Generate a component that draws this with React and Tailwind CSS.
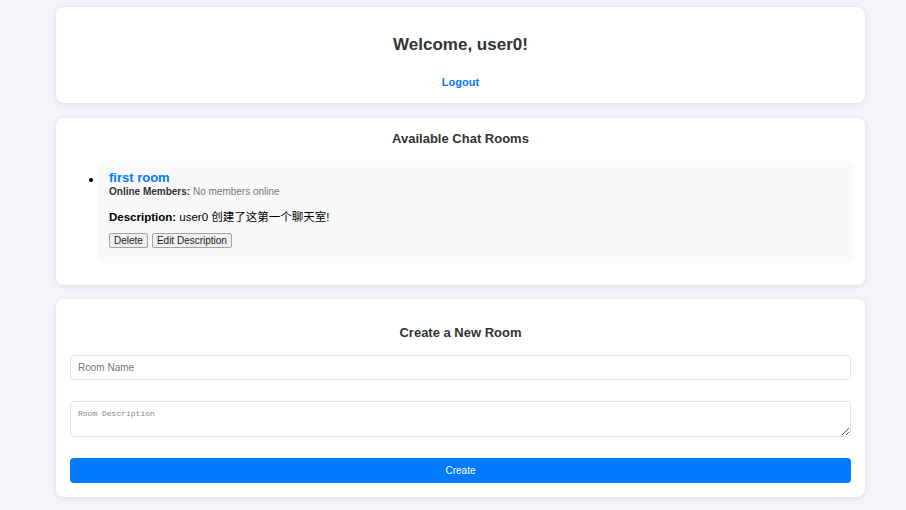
import React from "react";

const card = "bg-white rounded-lg shadow-[0_1px_6px_rgba(0,0,0,0.10)] w-[809px] ml-[56px]";
const btn = "h-[15px] px-[4px] text-[10px] leading-[13px] bg-[#efefef] border border-[#a3a3a3] rounded-[2px] text-[#222]";

export default function App() {
  return (
    <div
      className="min-h-[510px] bg-[#f4f5fa] pt-[7px] pb-[13px] text-[#333]"
      style={{ fontFamily: '"Liberation Sans", Arial, "Noto Sans CJK SC", sans-serif' }}
    >
      {/* BIENVENIDA */}
      <div className={`${card} pt-[28px] pb-[14px] flex flex-col items-center`}>
        <h2 className="text-[17px] leading-[20px] font-bold">Welcome, user0!</h2>
        <a className="mt-[20px] text-[11px] leading-[14px] font-bold text-[#007bff]">Logout</a>
      </div>

      {/* SALAS */}
      <div className={`${card} mt-[15px] pt-[13px] pb-[22px] px-[13px]`}>
        <h3 className="text-center text-[13px] leading-[16px] font-bold">Available Chat Rooms</h3>
        <div className="mt-[14px] flex items-start">
          <div className="w-[4px] h-[4px] rounded-full bg-black mt-[17px] ml-[20px] mr-[5px]" />
          <div className="flex-1 bg-[#f9f9f9] rounded-lg pl-[11px] pt-[10px] pb-[15px] shadow-[0_0_3px_rgba(0,0,0,0.04)]">
            <div className="text-[13px] leading-[14px] font-bold text-[#007bff]">first room</div>
            <div className="text-[10px] leading-[12px] mt-[1px]">
              <span className="font-bold">Online Members:</span>{" "}
              <span className="text-[#777]">No members online</span>
            </div>
            <div className="text-[11.5px] leading-[14px] mt-[12px] text-black">
              <span className="font-bold">Description:</span> user0 创建了这第一个聊天室!
            </div>
            <div className="mt-[9px] flex gap-[4px]">
              <button className={btn}>Delete</button>
              <button className={btn}>Edit Description</button>
            </div>
          </div>
        </div>
      </div>

      {/* CREAR */}
      <div className={`${card} mt-[14px] pt-[26px] pb-[14px] px-[14px]`}>
        <h3 className="text-center text-[13px] leading-[16px] font-bold">Create a New Room</h3>
        <input
          placeholder="Room Name"
          className="mt-[14px] w-full h-[25px] border border-[#e2e2e2] rounded-[4px] px-[7px] text-[10px] placeholder:text-[#777] outline-none"
        />
        <textarea
          placeholder="Room Description"
          className="block mt-[21px] w-full h-[36px] border border-[#e2e2e2] rounded-[4px] px-[7px] pt-[6px] text-[8px] placeholder:text-[#888] outline-none"
          style={{ fontFamily: '"Liberation Mono", monospace' }}
        />
        <button className="mt-[21px] w-full h-[25px] bg-[#007bff] rounded-[4px] text-white text-[10px]">
          Create
        </button>
      </div>
    </div>
  );
}
